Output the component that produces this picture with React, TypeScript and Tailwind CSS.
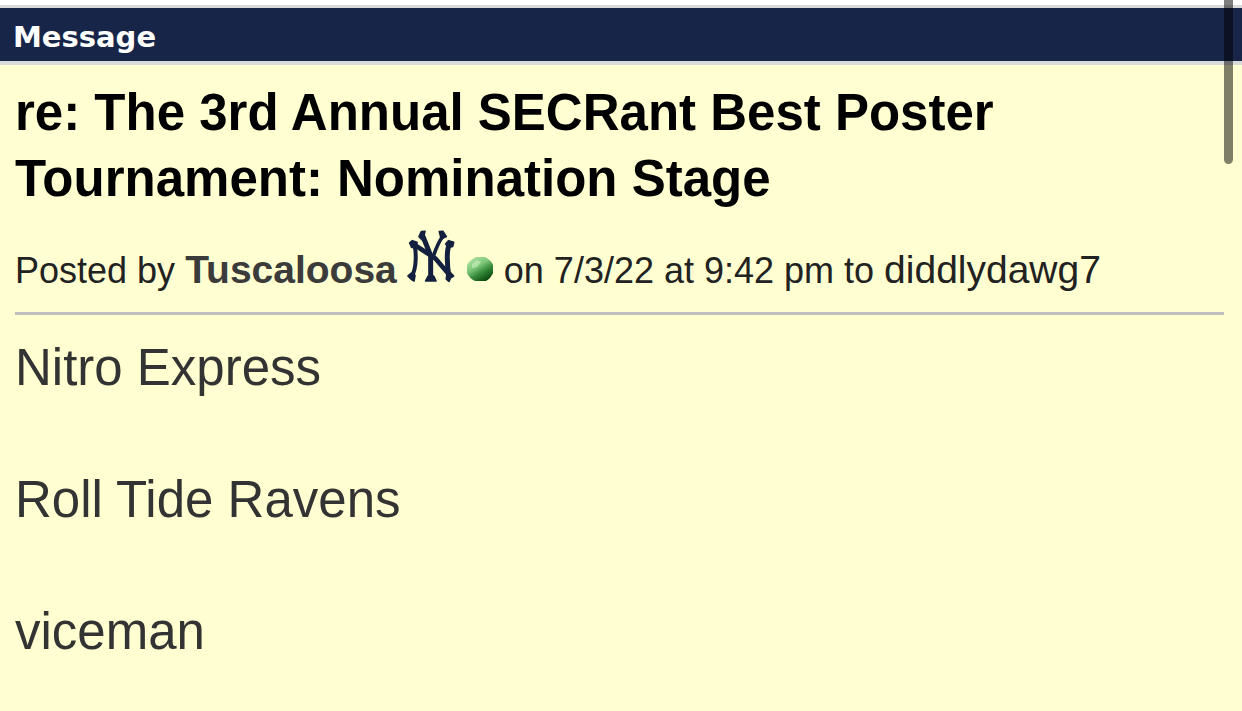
function TeamLogo() {
  return (
    <svg role="img" aria-label="New York team logo" viewBox="20 28 144 160" className="ml-[10px] inline-block h-[54px] w-12 align-baseline">
      <g fill="none" stroke="#14203f" strokeLinejoin="round">
        <path d="M42 76 Q47 90 46 120 Q45 150 34 170" strokeWidth="12" />
        <path d="M36 70 L66 90 L106 116 L150 168" strokeWidth="14" />
        <path d="M148 72 Q142 82 141 104 Q140 140 146 170" strokeWidth="15" />
        <path d="M66 46 Q76 68 91 108 V178" strokeWidth="15" />
        <path d="M128 48 Q113 68 100 106" strokeWidth="11" />
      </g>
      <g fill="#14203f" stroke="#14203f" strokeWidth="5" strokeLinejoin="round">
        <path d="M56 50 L63 35 L74 34 L71 46 L75 56 L65 59Z" />
        <path d="M117 35 L128 34 L138 50 L132 52 L123 58Z" />
        <path d="M28 69 L36 62 L50 67 L48 82 L34 82Z" />
        <path d="M136 72 L145 62 L160 67 L157 79 L144 82Z" />
        <path d="M23 168 L34 159 L44 166 L41 183 L33 178Z" />
        <path d="M76 183 L84 168 L100 168 L107 183Z" />
        <path d="M138 177 L140 160 L150 158 L160 168 L151 173 L146 184Z" />
      </g>
    </svg>
  );
}

function OnlineDot() {
  return (
    <svg role="img" aria-label="Online" viewBox="0 0 26 26" className="ml-3 inline-block size-[26px] align-baseline">
      <defs>
        <linearGradient id="ball" x1="0.2" y1="0.1" x2="0.75" y2="0.95">
          <stop offset="0" stopColor="#a5dc9c" />
          <stop offset="0.35" stopColor="#7cc577" />
          <stop offset="0.65" stopColor="#35893a" />
          <stop offset="1" stopColor="#0d4b10" />
        </linearGradient>
      </defs>
      <path d="M9 0 H18 Q24 3 26 8 V16 Q24 21 19 24 H8 Q2 21 0 16 V8 Q3 3 9 0Z" fill="url(#ball)" />
      <path d="M5 7 L10 3 L14 5 L10 10 L5 11Z" fill="#c6efbc" opacity="0.65" />
    </svg>
  );
}

const nominees = ["Nitro Express", "Roll Tide Ravens", "viceman"];

export default function App() {
  return (
    <div className="relative min-h-screen bg-[#ffffd1] font-['Liberation_Sans',Arial,sans-serif]">
      <header className="border-t-[5px] border-white">
        <div className="border-t-[3px] border-b-4 border-[#dadada] bg-[#172548] px-[13px] pt-[11px] pb-[5px]">
          <h2 className="font-['DejaVu_Sans',Verdana,sans-serif] text-[29px] leading-[37px] font-bold text-white">Message</h2>
        </div>
      </header>
      <main className="pt-[15px] pr-[18px] pl-[15px]">
        <h1 className="max-w-[1100px] text-[51px] leading-[66px] font-bold text-black">
          re: The 3rd Annual SECRant Best Poster Tournament: Nomination Stage
        </h1>
        <p className="border-b-[3px] border-[#c0c0c0] pt-[17px] pb-5 text-[36px] leading-[42px] text-[#222]">
          Posted by{" "}
          <a href="#tuscaloosa" className="text-[39px] font-bold text-[#3b3b3b]">Tuscaloosa</a>
          <TeamLogo />
          <OnlineDot />
          <span className="ml-[11px]">on 7/3/22 at 9:42 pm to </span>
          <a href="#diddlydawg7" className="text-[39px]">diddlydawg7</a>
        </p>
        <div className="flex flex-col gap-[66px] pt-5 text-[51px] leading-[66px] text-[#333]">
          {nominees.map((name) => (
            <p key={name}>{name}</p>
          ))}
        </div>
      </main>
      <div aria-hidden="true" className="absolute top-0 right-[9px] h-[164px] w-[9px] rounded-b-full bg-black/50" />
    </div>
  );
}
